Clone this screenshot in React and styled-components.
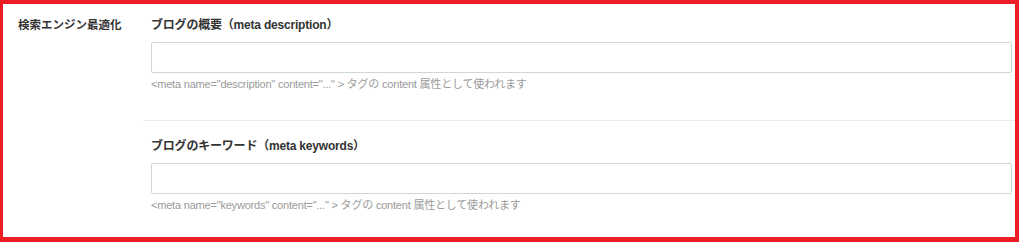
import React from 'react';
import styled, { createGlobalStyle } from 'styled-components';

const GlobalStyle = createGlobalStyle`
  html, body {
    margin: 0;
    padding: 0;
    background: #fff;
  }
  body {
    font-family: 'Liberation Sans', Arial, 'Noto Sans CJK JP', sans-serif;
    color: #333;
  }
`;

const fields = [
  {
    id: 'description',
    title: 'ブログの概要（meta description）',
    help: '<meta name="description" content="..." > タグの content 属性として使われます',
  },
  {
    id: 'keywords',
    title: 'ブログのキーワード（meta keywords）',
    help: '<meta name="keywords" content="..." > タグの content 属性として使われます',
  },
];

const Frame = styled.div`
  width: 1012px;
  height: 233px;
  border: 4px solid #ee1d25;
  border-left-width: 3px;
  border-bottom-width: 5px;
  display: flex;
  overflow: hidden;
`;

const Label = styled.div`
  width: 125px;
  flex-shrink: 0;
  padding: 12px 0 0 15px;
  font-size: 11.5px;
  font-weight: bold;
  line-height: 18px;
`;

const Fields = styled.div`
  flex: 1;
  display: flex;
  flex-direction: column;
`;

const Group = styled.div`
  padding: ${(p) => p.$top}px 3px 0 8px;
  height: ${(p) => p.$h}px;
  box-sizing: border-box;
  border-bottom: ${(p) => (p.$last ? 'none' : '1px solid #ebeced')};
`;

const Title = styled.div`
  font-size: 12px;
  font-weight: bold;
  line-height: 18px;
  margin-bottom: 8px;
  letter-spacing: -0.2px;
`;

const Input = styled.input`
  display: block;
  width: 100%;
  height: 31px;
  box-sizing: border-box;
  border: 1px solid #cfd6da;
  border-radius: 2px;
  background: #fff;
  outline: none;
  margin: 0;
`;

const Help = styled.div`
  margin-top: 3px;
  font-size: 11px;
  line-height: 16px;
  color: #9a9a9a;
  letter-spacing: -0.2px;
`;

const App = () => (
  <>
    <GlobalStyle />
    <Frame>
      <Label>検索エンジン最適化</Label>
      <Fields>
        {fields.map((item, i) => (
          <Group
            key={item.id}
            $top={i === 0 ? 12 : 16}
            $h={i === 0 ? 117 : 116}
            $last={i === fields.length - 1}
          >
            <Title>{item.title}</Title>
            <Input type="text" />
            <Help>{item.help}</Help>
          </Group>
        ))}
      </Fields>
    </Frame>
  </>
);

export default App;
